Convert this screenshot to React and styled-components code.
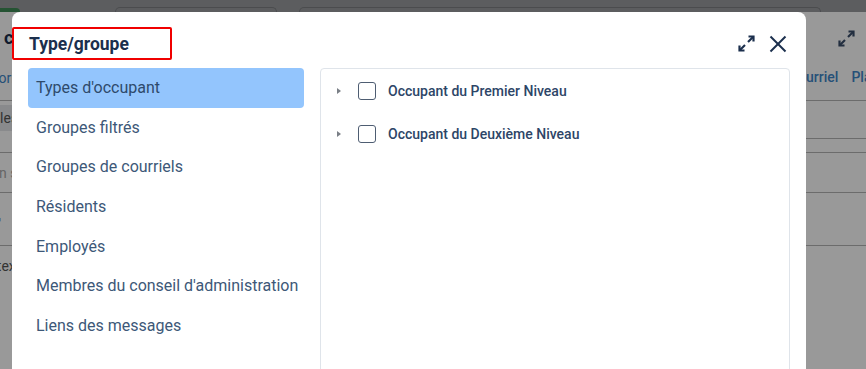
import styled, { createGlobalStyle } from "styled-components";

const GlobalStyle = createGlobalStyle`
  body {
    margin: 0;
    font-family: Roboto, "Liberation Sans", sans-serif;
  }
`;

const Page = styled.div`
  position: relative;
  width: 866px;
  height: 369px;
  overflow: hidden;
  background-color: #ffffff;
`;

const TopBar = styled.div`
  height: 12px;
  background-color: #9a9c9f;
  display: flex;
  align-items: flex-end;
  gap: 22px;
`;

const GreenPill = styled.div`
  width: 20px;
  height: 4px;
  margin-right: 73px;
  background-color: #3f8a55;
  border-radius: 0 6px 0 0;
`;

const BarTab = styled.div`
  width: ${(props) => props.width}px;
  height: 4px;
  border: 1px solid #7d7f83;
  border-bottom: none;
  border-radius: 6px 6px 0 0;
`;

const PageRow = styled.div`
  height: ${(props) => props.height}px;
  display: grid;
  grid-template-columns: 788px 1fr;
  border-bottom: ${(props) => (props.line ? "1px solid #b5b5b5" : "none")};
`;

const Cell = styled.div`
  display: flex;
  align-items: ${(props) => props.align || "center"};
  padding-top: ${(props) => props.top || 0}px;
  padding-left: ${(props) => props.left || 0}px;
  height: ${(props) => (props.height ? `${props.height}px` : "auto")};
  border-bottom: ${(props) => (props.line ? "1px solid #b5b5b5" : "none")};
  overflow: hidden;
  white-space: nowrap;
`;

const PageTitle = styled.span`
  font-size: 18px;
  font-weight: 700;
  color: #1b2f4d;
  margin-left: 4px;
`;

const PageLinks = styled.div`
  display: flex;
  gap: 13px;
  font-size: 14px;
  font-weight: 500;
  color: #3f86c8;
`;

const PageText = styled.span`
  font-size: 14px;
  color: ${(props) => props.color || "#555"};
  margin-left: ${(props) => props.offset || 0}px;
`;

const Chip = styled.span`
  padding: 5px 8px;
  margin-left: -54px;
  background-color: #e4e6ea;
  border-radius: 4px;
  font-size: 14px;
  color: #555;
`;

const Backdrop = styled.div`
  position: absolute;
  inset: 0;
  background-color: rgba(0, 0, 0, 0.4);
`;

const Modal = styled.div`
  position: absolute;
  top: 12px;
  left: 12px;
  width: 794px;
  height: 380px;
  background-color: #ffffff;
  border-radius: 8px 8px 0 0;
  display: flex;
  flex-direction: column;
`;

const Header = styled.div`
  display: flex;
  align-items: center;
  justify-content: space-between;
  padding: 15px 19px 0 0;
`;

const Title = styled.h2`
  box-sizing: border-box;
  width: 160px;
  height: 33px;
  margin: 0;
  padding-left: 15px;
  display: flex;
  align-items: center;
  border: 2px solid #f00000;
  border-radius: 2px;
  font-size: 17.5px;
  font-weight: 700;
  color: #1b2f4d;
`;

const Actions = styled.div`
  display: flex;
  align-items: center;
  gap: 13px;
`;

const IconButton = styled.button`
  display: flex;
  padding: 0;
  border: none;
  background: none;
  color: #1b2f4d;
  cursor: pointer;
`;

const Body = styled.div`
  flex: 1;
  display: flex;
  gap: 16px;
  padding: 8px 16px 0 16px;
`;

const Sidebar = styled.ul`
  width: 276px;
  margin: 0;
  padding: 0;
  list-style: none;
`;

const NavItem = styled.li`
  height: 39.6px;
  display: flex;
  align-items: center;
  padding-left: 8px;
  border-radius: 4px;
  font-size: 16px;
  color: ${(props) => (props.active ? "#2e4a6b" : "#3d5878")};
  background-color: ${(props) => (props.active ? "#93c5fd" : "transparent")};
`;

const TreePanel = styled.div`
  flex: 1;
  border: 1px solid #dfe4ea;
  border-radius: 4px;
`;

const TreeRow = styled.div`
  height: 43px;
  display: flex;
  align-items: center;
  padding-left: 16px;
`;

const Caret = styled.span`
  width: 0;
  height: 0;
  border-top: 3px solid transparent;
  border-bottom: 3px solid transparent;
  border-left: 4px solid #7a7f86;
  margin-right: 17px;
`;

const Checkbox = styled.span`
  box-sizing: border-box;
  width: 18px;
  height: 18px;
  border: 1.5px solid #4e5d72;
  border-radius: 3px;
  margin-right: 12px;
`;

const TreeLabel = styled.span`
  font-size: 14px;
  font-weight: 500;
  color: #2d4567;
`;

function ExpandIcon({ color = "currentColor" }) {
  return (
    <svg width="19" height="19" viewBox="0 0 19 19" fill="none" stroke={color} strokeWidth="2.2">
      <path d="M11 8L16 3" />
      <path d="M11.5 2.5H16.5V7.5" />
      <path d="M8 11L3 16" />
      <path d="M2.5 11.5V16.5H7.5" />
    </svg>
  );
}

function CloseIcon() {
  return (
    <svg width="18" height="18" viewBox="0 0 18 18" fill="none" stroke="currentColor" strokeWidth="2">
      <path d="M1.5 1.5L16.5 16.5" />
      <path d="M16.5 1.5L1.5 16.5" />
    </svg>
  );
}

const navItems = [
  "Types d'occupant",
  "Groupes filtrés",
  "Groupes de courriels",
  "Résidents",
  "Employés",
  "Membres du conseil d'administration",
  "Liens des messages",
];

const treeItems = ["Occupant du Premier Niveau", "Occupant du Deuxième Niveau"];

export default function App() {
  return (
    <>
      <GlobalStyle />
      <Page>
        <TopBar>
          <GreenPill />
          <BarTab width={160} />
          <BarTab width={520} />
        </TopBar>
        <PageRow height={50}>
          <Cell>
            <PageTitle>courriels</PageTitle>
          </Cell>
          <Cell left={49} top={3}>
            <ExpandIcon color="#3a4d6a" />
          </Cell>
        </PageRow>
        <PageRow height={38} line>
          <Cell align="flex-start" top={8}>
            <PageText color="#3f86c8" offset={-38}>
              Catégories
            </PageText>
          </Cell>
          <Cell align="flex-start" top={7} left={1}>
            <PageLinks>
              <span>Courriel</span>
              <span>Planification</span>
            </PageLinks>
          </Cell>
        </PageRow>
        <PageRow height={51} line>
          <Cell align="flex-start" top={4}>
            <Chip>Toutes les</Chip>
          </Cell>
          <Cell align="flex-start" line height={37} />
        </PageRow>
        <PageRow height={39} line>
          <Cell>
            <PageText color="#aaa" offset={-9}>
              En savoir
            </PageText>
          </Cell>
        </PageRow>
        <PageRow height={52} line>
          <Cell>
            <PageText offset={-4}>▪</PageText>
          </Cell>
        </PageRow>
        <PageRow height={40}>
          <Cell>
            <PageText offset={-28}>Contexte :</PageText>
          </Cell>
        </PageRow>
        <Backdrop />
        <Modal>
          <Header>
            <Title>Type/groupe</Title>
            <Actions>
              <IconButton>
                <ExpandIcon />
              </IconButton>
              <IconButton>
                <CloseIcon />
              </IconButton>
            </Actions>
          </Header>
          <Body>
            <Sidebar>
              {navItems.map((item, i) => (
                <NavItem key={item} active={i === 0}>
                  {item}
                </NavItem>
              ))}
            </Sidebar>
            <TreePanel>
              {treeItems.map((item) => (
                <TreeRow key={item}>
                  <Caret />
                  <Checkbox />
                  <TreeLabel>{item}</TreeLabel>
                </TreeRow>
              ))}
            </TreePanel>
          </Body>
        </Modal>
      </Page>
    </>
  );
}
